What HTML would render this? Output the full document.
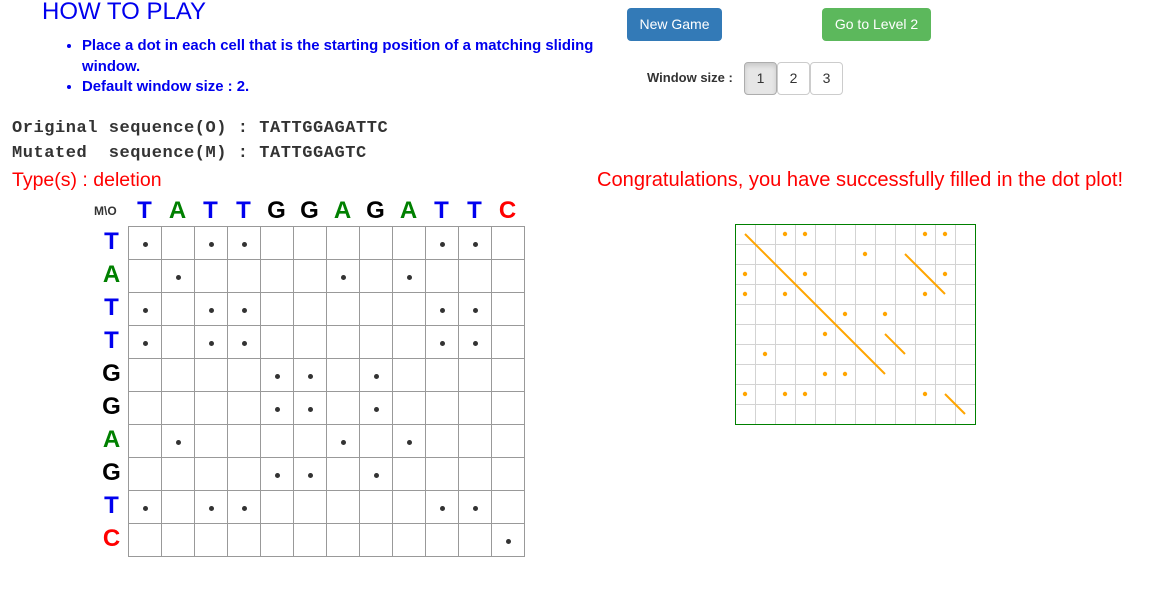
<!DOCTYPE html>
<html><head><meta charset="utf-8"><style>
body{margin:0;width:1164px;height:590px;background:#fff;position:relative;font-family:"Liberation Sans",Arial,sans-serif;overflow:hidden}
.a{position:absolute;white-space:nowrap}
h1{position:absolute;left:42px;top:-2px;margin:0;font-size:24px;font-weight:normal;color:#0000ee;line-height:28px}
ul{position:absolute;left:64px;top:36px;margin:0;padding:0 0 0 18px;color:#0000ee;font-weight:bold;font-size:14.9px;line-height:20.5px;width:540px}
.mono{font-family:"Liberation Mono",monospace;font-weight:bold;font-size:17px;letter-spacing:0.55px;color:#333}
.btn{position:absolute;color:#fff;font-size:14px;text-align:center;border-radius:4px;line-height:33px;height:33px}
.ws{position:absolute;top:62px;width:31px;height:31px;border:1px solid #ccc;border-radius:4px;text-align:center;line-height:31px;font-size:14px;color:#333;background:#fff}
table{position:absolute;left:128px;top:226px;border-collapse:collapse}
td{width:32px;height:32px;border:1px solid #999;padding:0;text-align:center;vertical-align:middle}
td i{display:inline-block;width:5px;height:5px;border-radius:50%;background:#333}
.L{position:absolute;font-weight:bold;font-size:24px;width:33px;text-align:center}
</style></head><body>
<h1>HOW TO PLAY</h1>
<ul><li>Place a dot in each cell that is the starting position of a matching sliding window.</li><li>Default window size : 2.</li></ul>
<div class="a mono" style="left:12px;top:119px">Original sequence(O) : TATTGGAGATTC</div>
<div class="a mono" style="left:12px;top:144px">Mutated&nbsp; sequence(M) : TATTGGAGTC</div>
<div class="a" style="left:12px;top:169px;font-size:19.5px;color:#f00">Type(s) : deletion</div>
<div class="a" style="left:597px;top:169px;font-size:20.1px;color:#f00">Congratulations, you have successfully filled in the dot plot!</div>
<div class="btn" style="left:627px;top:8px;width:95px;background:#337ab7">New Game</div>
<div class="btn" style="left:822px;top:8px;width:109px;background:#5cb85c">Go to Level 2</div>
<div class="a" style="left:647px;top:70px;font-size:13px;font-weight:bold;color:#333">Window size :</div>
<div class="ws" style="left:744px;background:#e6e6e6;border-color:#adadad;box-shadow:inset 0 3px 5px rgba(0,0,0,.125)">1</div>
<div class="ws" style="left:777px">2</div>
<div class="ws" style="left:810px">3</div>
<div class="a" style="left:94px;top:204px;font-size:12px;font-weight:bold;color:#333">M\O</div>
<div id="hdr"></div>
<table id="t"></table>
<svg class="a" style="left:735px;top:224px" width="241" height="201" id="sv"></svg>
<script>
var O="TATTGGAGATTC",M="TATTGGAGTC",col={T:"#0000ee",A:"#008000",G:"#000",C:"#f00"};
var h="";
for(var i=0;i<12;i++)h+='<div class="L" style="left:'+(128+33*i)+'px;top:197px;color:'+col[O[i]]+'">'+O[i]+'</div>';
for(var j=0;j<10;j++)h+='<div class="L" style="left:95px;top:'+(228+33*j)+'px;color:'+col[M[j]]+'">'+M[j]+'</div>';
document.getElementById("hdr").innerHTML=h;
var t="";
for(var j=0;j<10;j++){t+="<tr>";for(var i=0;i<12;i++)t+="<td>"+(M[j]==O[i]?"<i></i>":"")+"</td>";t+="</tr>";}
document.getElementById("t").innerHTML=t;
var s='';
for(var i=1;i<12;i++)s+='<line x1="'+(20*i+.5)+'" y1="0" x2="'+(20*i+.5)+'" y2="200" stroke="#d3d3d3"/>';
for(var j=1;j<10;j++)s+='<line x1="0" y1="'+(20*j+.5)+'" x2="240" y2="'+(20*j+.5)+'" stroke="#d3d3d3"/>';
s+='<rect x="0.5" y="0.5" width="240" height="200" fill="none" stroke="#008000"/>';
var L=[[0,0,7,7],[8,1,10,3],[7,5,8,6],[10,8,11,9]];
L.forEach(function(l){s+='<line x1="'+(10+20*l[0])+'" y1="'+(10+20*l[1])+'" x2="'+(10+20*l[2])+'" y2="'+(10+20*l[3])+'" stroke="orange" stroke-width="2"/>';});
var D=[[2,0],[3,0],[9,0],[10,0],[6,1],[0,2],[3,2],[10,2],[0,3],[2,3],[9,3],[5,4],[7,4],[4,5],[1,6],[4,7],[5,7],[0,8],[2,8],[3,8],[9,8]];
D.forEach(function(d){s+='<circle cx="'+(10+20*d[0])+'" cy="'+(10+20*d[1])+'" r="2.2" fill="orange"/>';});
document.getElementById("sv").innerHTML=s;
</script>
</body></html>
